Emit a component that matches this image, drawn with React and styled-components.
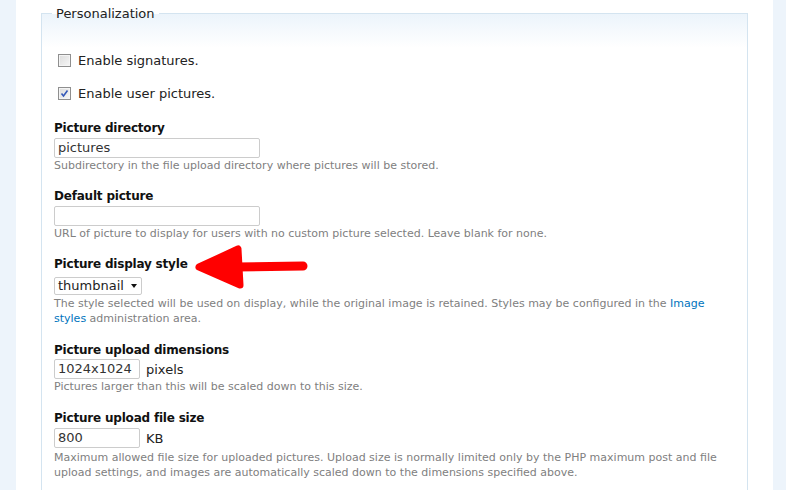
import styled, { createGlobalStyle } from 'styled-components';

const GlobalStyle = createGlobalStyle`
  html, body {
    margin: 0;
    padding: 0;
    background: #fff;
  }
  body {
    font-family: "DejaVu Sans", Verdana, sans-serif;
    color: #333;
  }
`;

const Page = styled.div`
  position: relative;
  display: flex;
  width: 786px;
  height: 490px;
  overflow: hidden;
`;

const SideStrip = styled.div`
  flex: 0 0 ${(p) => p.$width}px;
  background: #edf4fb;
`;

const Main = styled.div`
  flex: 1;
  padding: 6px 25px 0 25px;
  background: #fff;
`;

const Fieldset = styled.fieldset`
  margin: 0;
  padding: 29px 12px 20px 12px;
  border: 1px solid #d4e4f0;
  background: linear-gradient(to bottom, #ecf4fb 0, #ffffff 34px, #ffffff 100%);
  min-height: 600px;
`;

const Legend = styled.legend`
  padding: 0 4px;
  margin-left: -2px;
  font-size: 13px;
  line-height: 15px;
  color: #222;
`;

const CheckRow = styled.label`
  display: flex;
  align-items: center;
  gap: 7px;
  height: 20px;
  margin: 0 0 13px 4px;
  font-size: 13px;
  color: #222;
`;

const Box = styled.span`
  box-sizing: border-box;
  width: 13px;
  height: 13px;
  border: 1px solid #8f8f8f;
  background: linear-gradient(135deg, #dcdcdc 0%, #f6f6f6 100%);
  box-shadow: inset 0 0 0 1px #f4f4f4;
  display: flex;
  align-items: center;
  justify-content: center;
`;

const FormItem = styled.div`
  margin: ${(p) => (p.$first ? '17px' : '0')} 0 ${(p) => p.$after ?? 15}px 0;
`;

const Label = styled.div`
  font-weight: bold;
  font-size: 12px;
  letter-spacing: -0.2px;
  line-height: 16px;
  color: #111;
  margin-bottom: ${(p) => p.$gap ?? 2}px;
`;

const InputRow = styled.div`
  display: flex;
  align-items: center;
  gap: 6px;
  font-size: 13px;
  color: #222;
`;

const TextInput = styled.div`
  box-sizing: border-box;
  width: ${(p) => p.$width}px;
  height: 20px;
  border: 1px solid #ccc;
  border-radius: 2px;
  padding: 0 3px;
  font-size: 13px;
  line-height: 18px;
  color: #333;
`;

const Select = styled.div`
  box-sizing: border-box;
  width: 88px;
  height: 18px;
  border: 1px solid #ccc;
  border-radius: 2px;
  padding: 0 4px 0 3px;
  display: flex;
  align-items: center;
  justify-content: space-between;
  font-size: 13px;
  line-height: 16px;
  color: #222;
`;

const Caret = styled.span`
  width: 0;
  height: 0;
  border-left: 3.5px solid transparent;
  border-right: 3.5px solid transparent;
  border-top: 4px solid #111;
`;

const Description = styled.div`
  font-size: 11px;
  line-height: 15px;
  color: #808080;
  margin-top: ${(p) => p.$top ?? 0}px;
  a {
    color: #0074bd;
    text-decoration: none;
  }
`;

const Arrow = styled.svg`
  position: absolute;
  left: 190px;
  top: 240px;
  pointer-events: none;
`;

const CheckMark = () => (
  <svg width="9" height="9" viewBox="0 0 9 9">
    <path d="M1.5 4.5 L3.5 7 L7.5 1.5" fill="none" stroke="#3458b8" strokeWidth="1.6" />
  </svg>
);

const App = () => {
  return (
    <Page>
      <GlobalStyle />
      <SideStrip $width={16} />
      <Main>
        <Fieldset>
          <Legend>Personalization</Legend>
          <CheckRow>
            <Box />
            Enable signatures.
          </CheckRow>
          <CheckRow>
            <Box>
              <CheckMark />
            </Box>
            Enable user pictures.
          </CheckRow>

          <FormItem $first>
            <Label>Picture directory</Label>
            <TextInput $width={206}>pictures</TextInput>
            <Description>Subdirectory in the file upload directory where pictures will be stored.</Description>
          </FormItem>

          <FormItem>
            <Label>Default picture</Label>
            <TextInput $width={206} />
            <Description>URL of picture to display for users with no custom picture selected. Leave blank for none.</Description>
          </FormItem>

          <FormItem $after={16}>
            <Label $gap={5}>Picture display style</Label>
            <Select>
              thumbnail
              <Caret />
            </Select>
            <Description $top={1}>
              The style selected will be used on display, while the original image is retained. Styles may be
              configured in the <a href="#image-styles">Image styles</a> administration area.
            </Description>
          </FormItem>

          <FormItem $after={16}>
            <Label $gap={1}>Picture upload dimensions</Label>
            <InputRow>
              <TextInput $width={86}>1024x1024</TextInput>
              pixels
            </InputRow>
            <Description>Pictures larger than this will be scaled down to this size.</Description>
          </FormItem>

          <FormItem>
            <Label $gap={2}>Picture upload file size</Label>
            <InputRow>
              <TextInput $width={86}>800</TextInput>
              KB
            </InputRow>
            <Description $top={2}>
              Maximum allowed file size for uploaded pictures. Upload size is normally limited only by the PHP
              maximum post and file upload settings, and images are automatically scaled down to the dimensions
              specified above.
            </Description>
          </FormItem>
        </Fieldset>
      </Main>
      <SideStrip $width={13} />
      <Arrow width="125" height="55" viewBox="0 0 125 55">
        <polygon points="9,27 48,9 50,45" fill="#ff0000" stroke="#ff0000" strokeWidth="7" strokeLinejoin="round" />
        <line x1="46" y1="27" x2="113" y2="26" stroke="#ff0000" strokeWidth="9" strokeLinecap="round" />
      </Arrow>
    </Page>
  );
};

export default App;
